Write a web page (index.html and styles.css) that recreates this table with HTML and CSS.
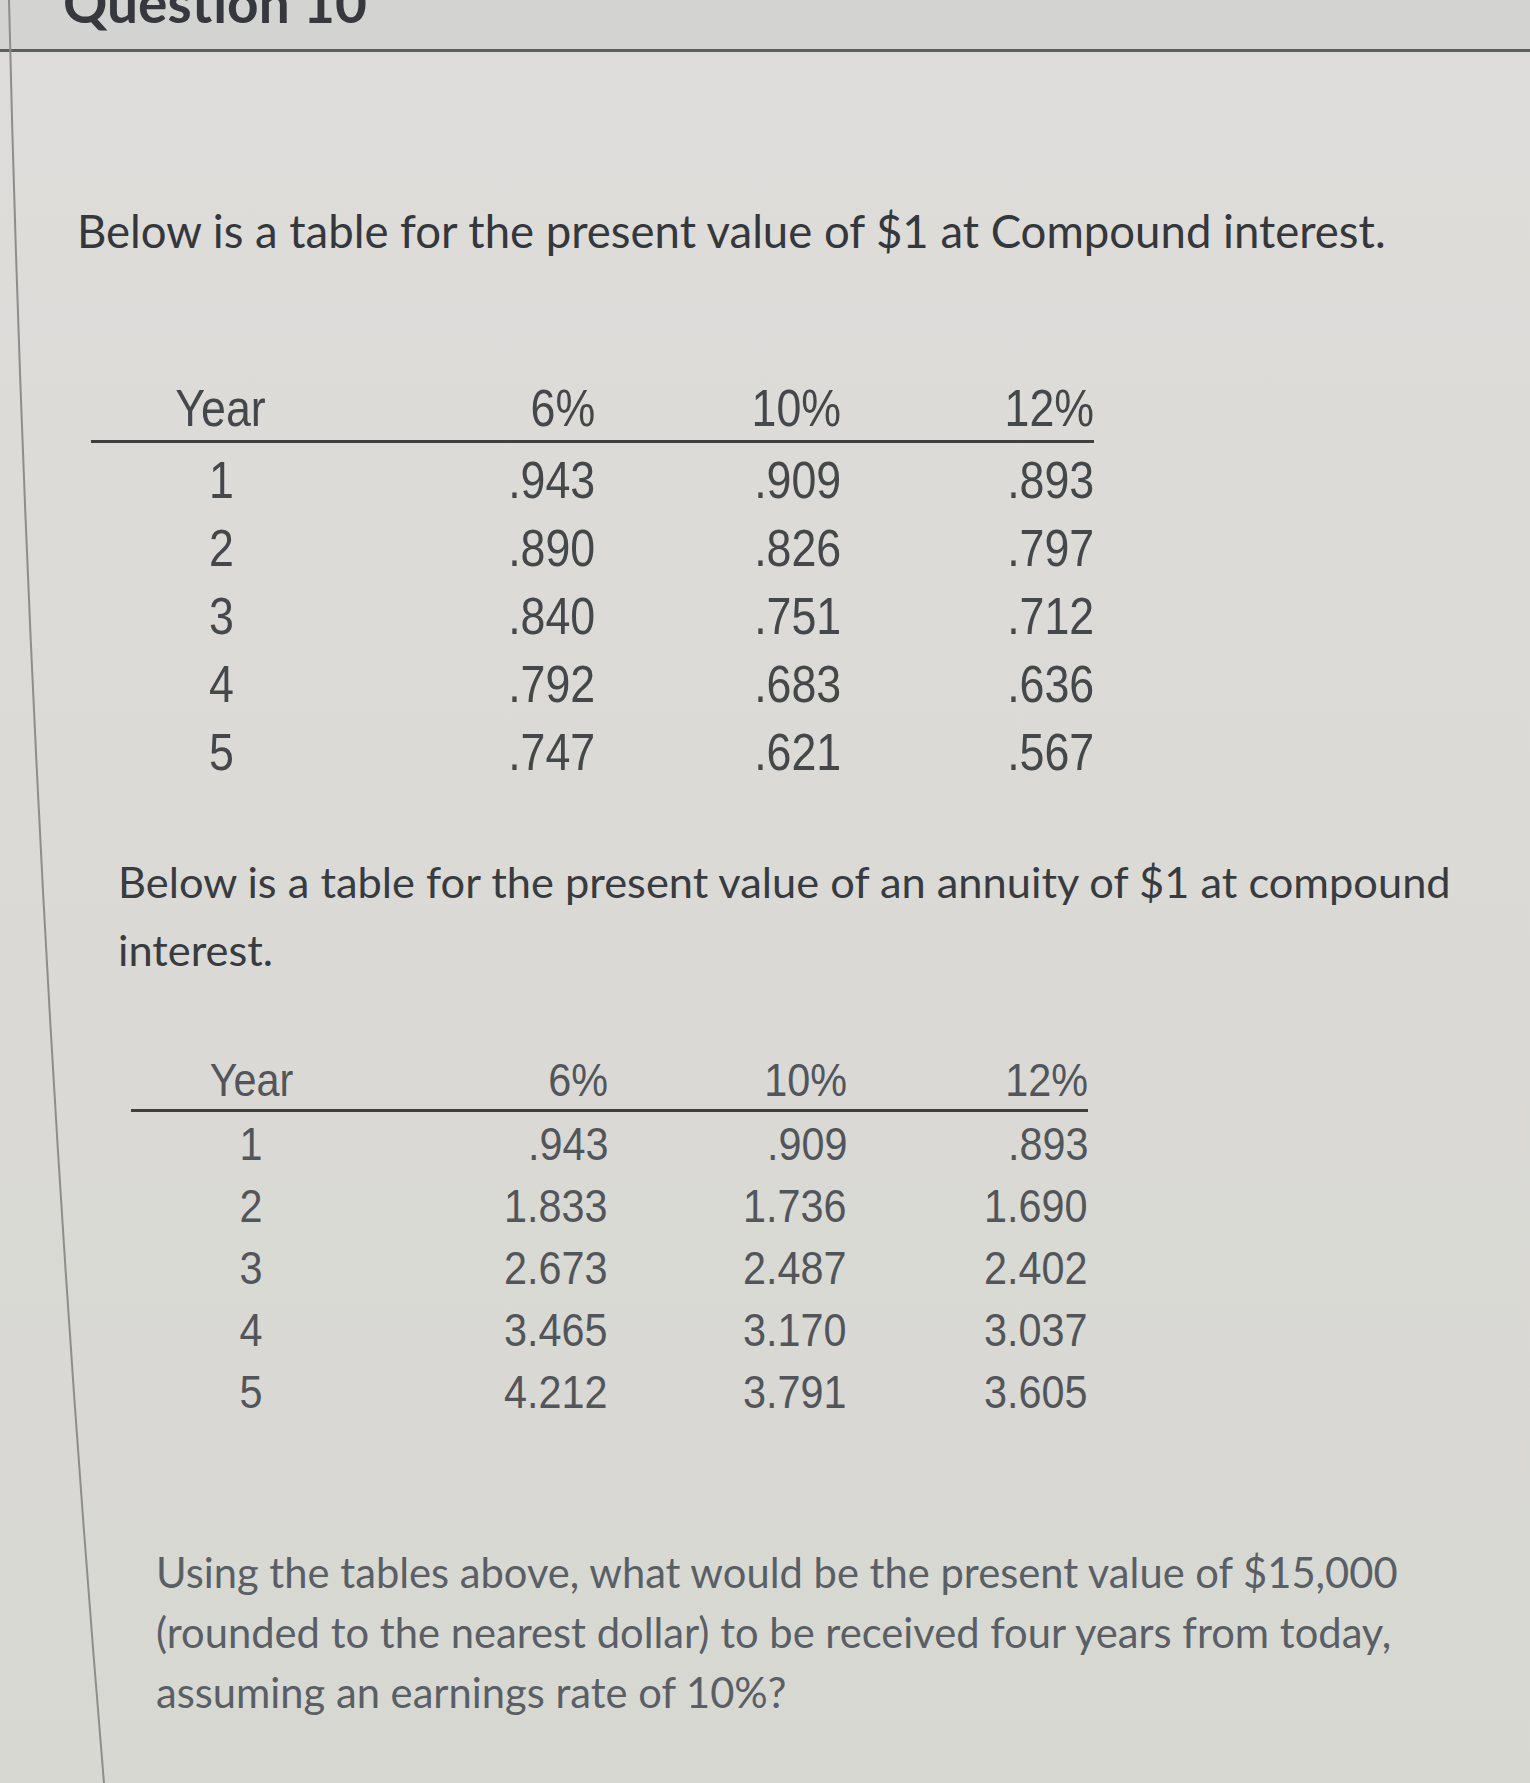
FILE: index.html
```html
<!DOCTYPE html>
<html>
<head>
<meta charset="utf-8">
<link rel="stylesheet" href="styles.css">
</head>
<body>
<div class="page">
  <svg class="edge" width="1530" height="1783" viewBox="0 0 1530 1783"><path d="M9 0 Q 30 900 104 1783" fill="none" stroke="#8d8e8c" stroke-width="2"/></svg>
  <header class="qhead"><h2 class="qtitle">Question 10</h2></header>
  <main class="content">
    <p class="p1">Below is a table for the present value of $1 at Compound interest.</p>
    <table class="tbl t1">
      <colgroup><col class="c-year"><col class="c-a"><col class="c-b"><col class="c-c"></colgroup>
      <thead><tr><th class="yr"><span>Year</span></th><th><span>6%</span></th><th><span>10%</span></th><th><span>12%</span></th></tr></thead>
      <tbody>
        <tr><td class="yr"><span>1</span></td><td><span>.943</span></td><td><span>.909</span></td><td><span>.893</span></td></tr>
        <tr><td class="yr"><span>2</span></td><td><span>.890</span></td><td><span>.826</span></td><td><span>.797</span></td></tr>
        <tr><td class="yr"><span>3</span></td><td><span>.840</span></td><td><span>.751</span></td><td><span>.712</span></td></tr>
        <tr><td class="yr"><span>4</span></td><td><span>.792</span></td><td><span>.683</span></td><td><span>.636</span></td></tr>
        <tr><td class="yr"><span>5</span></td><td><span>.747</span></td><td><span>.621</span></td><td><span>.567</span></td></tr>
      </tbody>
    </table>
    <p class="p2">Below is a table for the present value of an annuity of $1 at compound interest.</p>
    <table class="tbl t2">
      <colgroup><col class="c-year"><col class="c-a"><col class="c-b"><col class="c-c"></colgroup>
      <thead><tr><th class="yr"><span>Year</span></th><th><span>6%</span></th><th><span>10%</span></th><th><span>12%</span></th></tr></thead>
      <tbody>
        <tr><td class="yr"><span>1</span></td><td><span>.943</span></td><td><span>.909</span></td><td><span>.893</span></td></tr>
        <tr><td class="yr"><span>2</span></td><td><span>1.833</span></td><td><span>1.736</span></td><td><span>1.690</span></td></tr>
        <tr><td class="yr"><span>3</span></td><td><span>2.673</span></td><td><span>2.487</span></td><td><span>2.402</span></td></tr>
        <tr><td class="yr"><span>4</span></td><td><span>3.465</span></td><td><span>3.170</span></td><td><span>3.037</span></td></tr>
        <tr><td class="yr"><span>5</span></td><td><span>4.212</span></td><td><span>3.791</span></td><td><span>3.605</span></td></tr>
      </tbody>
    </table>
    <p class="p3">Using the tables above, what would be the present value of $15,000 (rounded to the nearest dollar) to be received four years from today, assuming an earnings rate of 10%?</p>
  </main>
</div>
</body>
</html>
```
FILE: styles.css
```css
html, body {
  margin: 0;
  padding: 0;
}
body {
  background: #dcdbd7;
  font-family: Lato, "Open Sans", sans-serif;
  color: #3a3d41;
}
.page {
  position: relative;
  width: 1530px;
  height: 1783px;
  overflow: hidden;
  background: linear-gradient(180deg, #dedddb 0%, #dbdad6 45%, #d8d8d3 100%);
}
.edge {
  position: absolute;
  left: 0;
  top: 0;
  pointer-events: none;
}
.qhead {
  height: 49px;
  border-bottom: 3px solid #5e5f60;
  background: #d3d3d1;
  overflow: hidden;
  padding-left: 63px;
}
.qtitle {
  margin: -31px 0 0 0;
  font-family: Lato, sans-serif;
  font-weight: 700;
  font-size: 55px;
  line-height: 66px;
  color: #36383e;
}
.content {
  display: flex;
  flex-direction: column;
  align-items: flex-start;
}
.p1 {
  margin: 145px 0 0 77px;
  font-size: 45.5px;
  line-height: 68px;
  color: #34373b;
}
.p2 {
  margin: 61px 0 0 118px;
  max-width: 1390px;
  font-size: 43.4px;
  line-height: 68px;
  color: #383b3f;
}
.p3 {
  margin: 120px 0 0 156px;
  max-width: 1300px;
  font-size: 41.7px;
  line-height: 60px;
  color: #5a5f66;
}
.tbl {
  border-collapse: collapse;
  font-family: "Liberation Sans", Arial, sans-serif;
  color: #45484b;
}
.tbl th, .tbl td {
  padding: 0;
  text-align: right;
  font-weight: 400;
  white-space: nowrap;
}
.tbl span {
  display: inline-block;
  transform-origin: right center;
}
.tbl .yr {
  text-align: center;
}
.tbl .yr span {
  transform-origin: center center;
}
.tbl thead th {
  border-bottom: 3px solid #3e3f3f;
}
.t1 {
  margin: 110px 0 0 91px;
  width: 1003px;
  font-size: 52px;
}
.t1 span {
  transform: scaleX(0.86);
}
.t1 .c-year { width: 260px; }
.t1 .c-a { width: 244px; }
.t1 .c-b { width: 246px; }
.t1 .c-c { width: 253px; }
.t1 thead th { height: 65px; }
.t1 tbody td { height: 68px; }
.t1 tbody tr:first-child td { padding-top: 3px; }
.t2 {
  margin: 67px 0 0 131px;
  width: 957px;
  font-size: 47px;
  color: #52565a;
}
.t2 span {
  transform: scaleX(0.88);
}
.t2 .c-year { width: 240px; }
.t2 .c-a { width: 237px; }
.t2 .c-b { width: 239px; }
.t2 .c-c { width: 241px; }
.t2 thead th { height: 59px; }
.t2 tbody td { height: 62px; }
```
